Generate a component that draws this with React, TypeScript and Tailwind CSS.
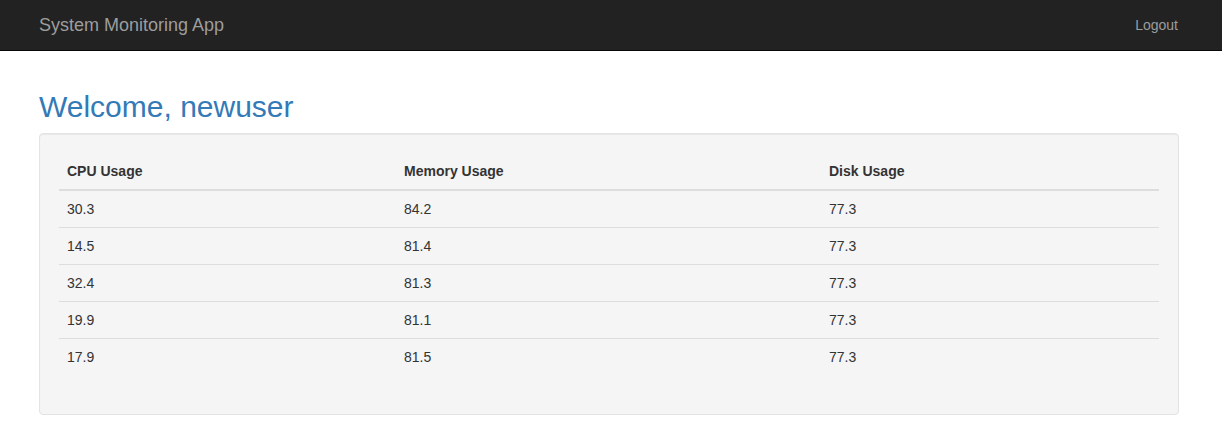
export default function App() {
  const rows = [
    ["30.3", "84.2", "77.3"],
    ["14.5", "81.4", "77.3"],
    ["32.4", "81.3", "77.3"],
    ["19.9", "81.1", "77.3"],
    ["17.9", "81.5", "77.3"],
  ];
  return (
    <div
      className="min-h-screen bg-white text-[14px] leading-[20px] text-[#333333]"
      style={{ fontFamily: '"Liberation Sans", Arial, Helvetica, sans-serif' }}
    >
      <nav className="h-[51px] bg-[#222222] border-b border-[#080808]">
        <div className="ml-[39px] mr-[43px] h-[50px] flex items-center justify-between">
          <a className="text-[18px] leading-[20px] text-[#9d9d9d]">System Monitoring App</a>
          <a className="text-[14px] leading-[20px] text-[#9d9d9d] mr-px">Logout</a>
        </div>
      </nav>
      <main className="ml-[39px] mr-[43px] pt-[39px]">
        <h2 className="text-[30px] leading-[33px] font-normal text-[#337ab7] mb-[10px]">
          Welcome, newuser
        </h2>
        <div className="bg-[#f5f5f5] border border-[#e3e3e3] rounded-[4px] p-[19px] shadow-[inset_0_1px_1px_rgba(0,0,0,0.05)]">
          <table className="w-full border-collapse mb-[20px] text-left">
            <thead>
              <tr>
                <th className="w-[337px] p-[8px] font-bold border-b-2 border-[#dddddd] align-bottom">CPU Usage</th>
                <th className="w-[425px] p-[8px] font-bold border-b-2 border-[#dddddd] align-bottom">Memory Usage</th>
                <th className="p-[8px] font-bold border-b-2 border-[#dddddd] align-bottom">Disk Usage</th>
              </tr>
            </thead>
            <tbody>
              {rows.map((r, i) => (
                <tr key={i}>
                  {r.map((c, j) => (
                    <td key={j} className={"p-[8px] align-top " + (i === 0 ? "" : "border-t border-[#dddddd]")}>
                      {c}
                    </td>
                  ))}
                </tr>
              ))}
            </tbody>
          </table>
        </div>
      </main>
    </div>
  );
}
